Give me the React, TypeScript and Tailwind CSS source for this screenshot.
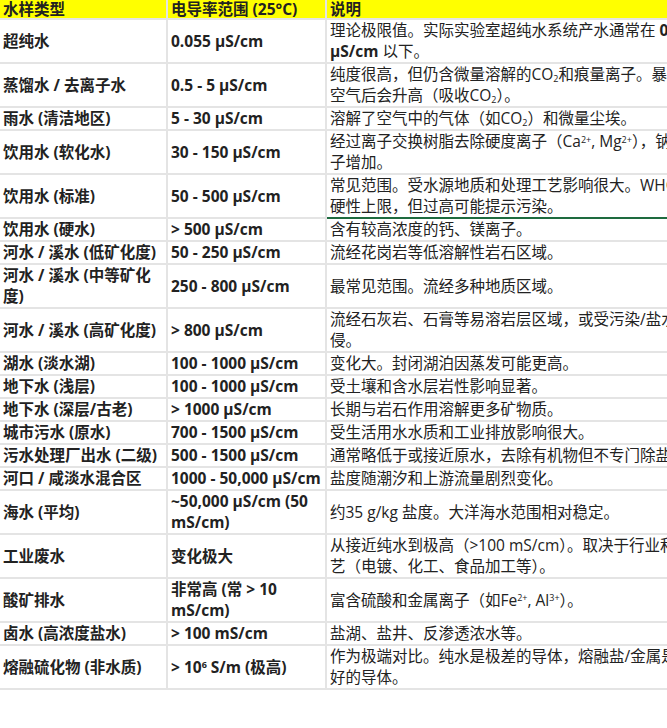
const rows: [string, React.ReactNode, React.ReactNode, boolean?][] = [
  ['超纯水', '0.055 μS/cm', <>理论极限值。实际实验室超纯水系统产水通常在 <b>0.1 μS/cm</b> 以下。</>],
  ['蒸馏水 / 去离子水', '0.5 - 5 μS/cm', <>纯度很高，但仍含微量溶解的CO<sub>2</sub>和痕量离子。暴露空气后会升高（吸收CO<sub>2</sub>）。</>],
  ['雨水 (清洁地区)', '5 - 30 μS/cm', <>溶解了空气中的气体（如CO<sub>2</sub>）和微量尘埃。</>],
  ['饮用水 (软化水)', '30 - 150 μS/cm', <>经过离子交换树脂去除硬度离子（Ca<sup>2+</sup>, Mg<sup>2+</sup>），钠离子增加。</>],
  ['饮用水 (标准)', '50 - 500 μS/cm', '常见范围。受水源地质和处理工艺影响很大。WHO无硬性上限，但过高可能提示污染。', true],
  ['饮用水 (硬水)', '> 500 μS/cm', '含有较高浓度的钙、镁离子。'],
  ['河水 / 溪水 (低矿化度)', '50 - 250 μS/cm', '流经花岗岩等低溶解性岩石区域。'],
  ['河水 / 溪水 (中等矿化度)', '250 - 800 μS/cm', '最常见范围。流经多种地质区域。'],
  ['河水 / 溪水 (高矿化度)', '> 800 μS/cm', '流经石灰岩、石膏等易溶岩层区域，或受污染/盐水入侵。'],
  ['湖水 (淡水湖)', '100 - 1000 μS/cm', '变化大。封闭湖泊因蒸发可能更高。'],
  ['地下水 (浅层)', '100 - 1000 μS/cm', '受土壤和含水层岩性影响显著。'],
  ['地下水 (深层/古老)', '> 1000 μS/cm', '长期与岩石作用溶解更多矿物质。'],
  ['城市污水 (原水)', '700 - 1500 μS/cm', '受生活用水水质和工业排放影响很大。'],
  ['污水处理厂出水 (二级)', '500 - 1500 μS/cm', '通常略低于或接近原水，去除有机物但不专门除盐。'],
  ['河口 / 咸淡水混合区', '1000 - 50,000 μS/cm', '盐度随潮汐和上游流量剧烈变化。'],
  ['海水 (平均)', '~50,000 μS/cm (50 mS/cm)', '约35 g/kg 盐度。大洋海水范围相对稳定。'],
  ['工业废水', '变化极大', '从接近纯水到极高（>100 mS/cm）。取决于行业和工艺（电镀、化工、食品加工等）。'],
  ['酸矿排水', '非常高 (常 > 10 mS/cm)', <>富含硫酸和金属离子（如Fe<sup>2+</sup>, Al<sup>3+</sup>）。</>],
  ['卤水 (高浓度盐水)', '> 100 mS/cm', '盐湖、盐井、反渗透浓水等。'],
  ['熔融硫化物 (非水质)', <>&gt; 10<sup>6</sup> S/m (极高)</>, '作为极端对比。纯水是极差的导体，熔融盐/金属是极好的导体。'],
];

export default function App() {
  const cell = 'border-2 border-[#e4e4e4] px-[3px] py-0 align-middle';
  return (
    <div className="w-[667px] h-[728px] overflow-hidden bg-white" style={{ fontFamily: '"Open Sans", "Noto Sans CJK SC", sans-serif' }}>
      <table className="border-collapse table-fixed w-[700px] -mt-[2px] -ml-[2px] text-[15.5px] leading-[21px] text-[#222] [&_sub]:text-[9px] [&_sup]:text-[9px]">
        <colgroup>
          <col className="w-[168px]" />
          <col className="w-[159px]" />
          <col className="w-[373px]" />
        </colgroup>
        <thead>
          <tr className="bg-[#ffff00] font-bold text-left">
            <th className={cell + ' leading-[18px]'}>水样类型</th>
            <th className={cell + ' leading-[18px]'}>电导率范围 (25°C)</th>
            <th className={cell + ' leading-[18px]'}>说明</th>
          </tr>
        </thead>
        <tbody>
          {rows.map(([a, b, c, hl], i) => (
            <tr key={i}>
              <td className={cell + ' font-bold'}>{a}</td>
              <td className={cell + ' font-bold'}>{b}</td>
              <td className={cell + (hl ? ' !border-[#1e6b3f]' : '')}>{c}</td>
            </tr>
          ))}
        </tbody>
      </table>
    </div>
  );
}
